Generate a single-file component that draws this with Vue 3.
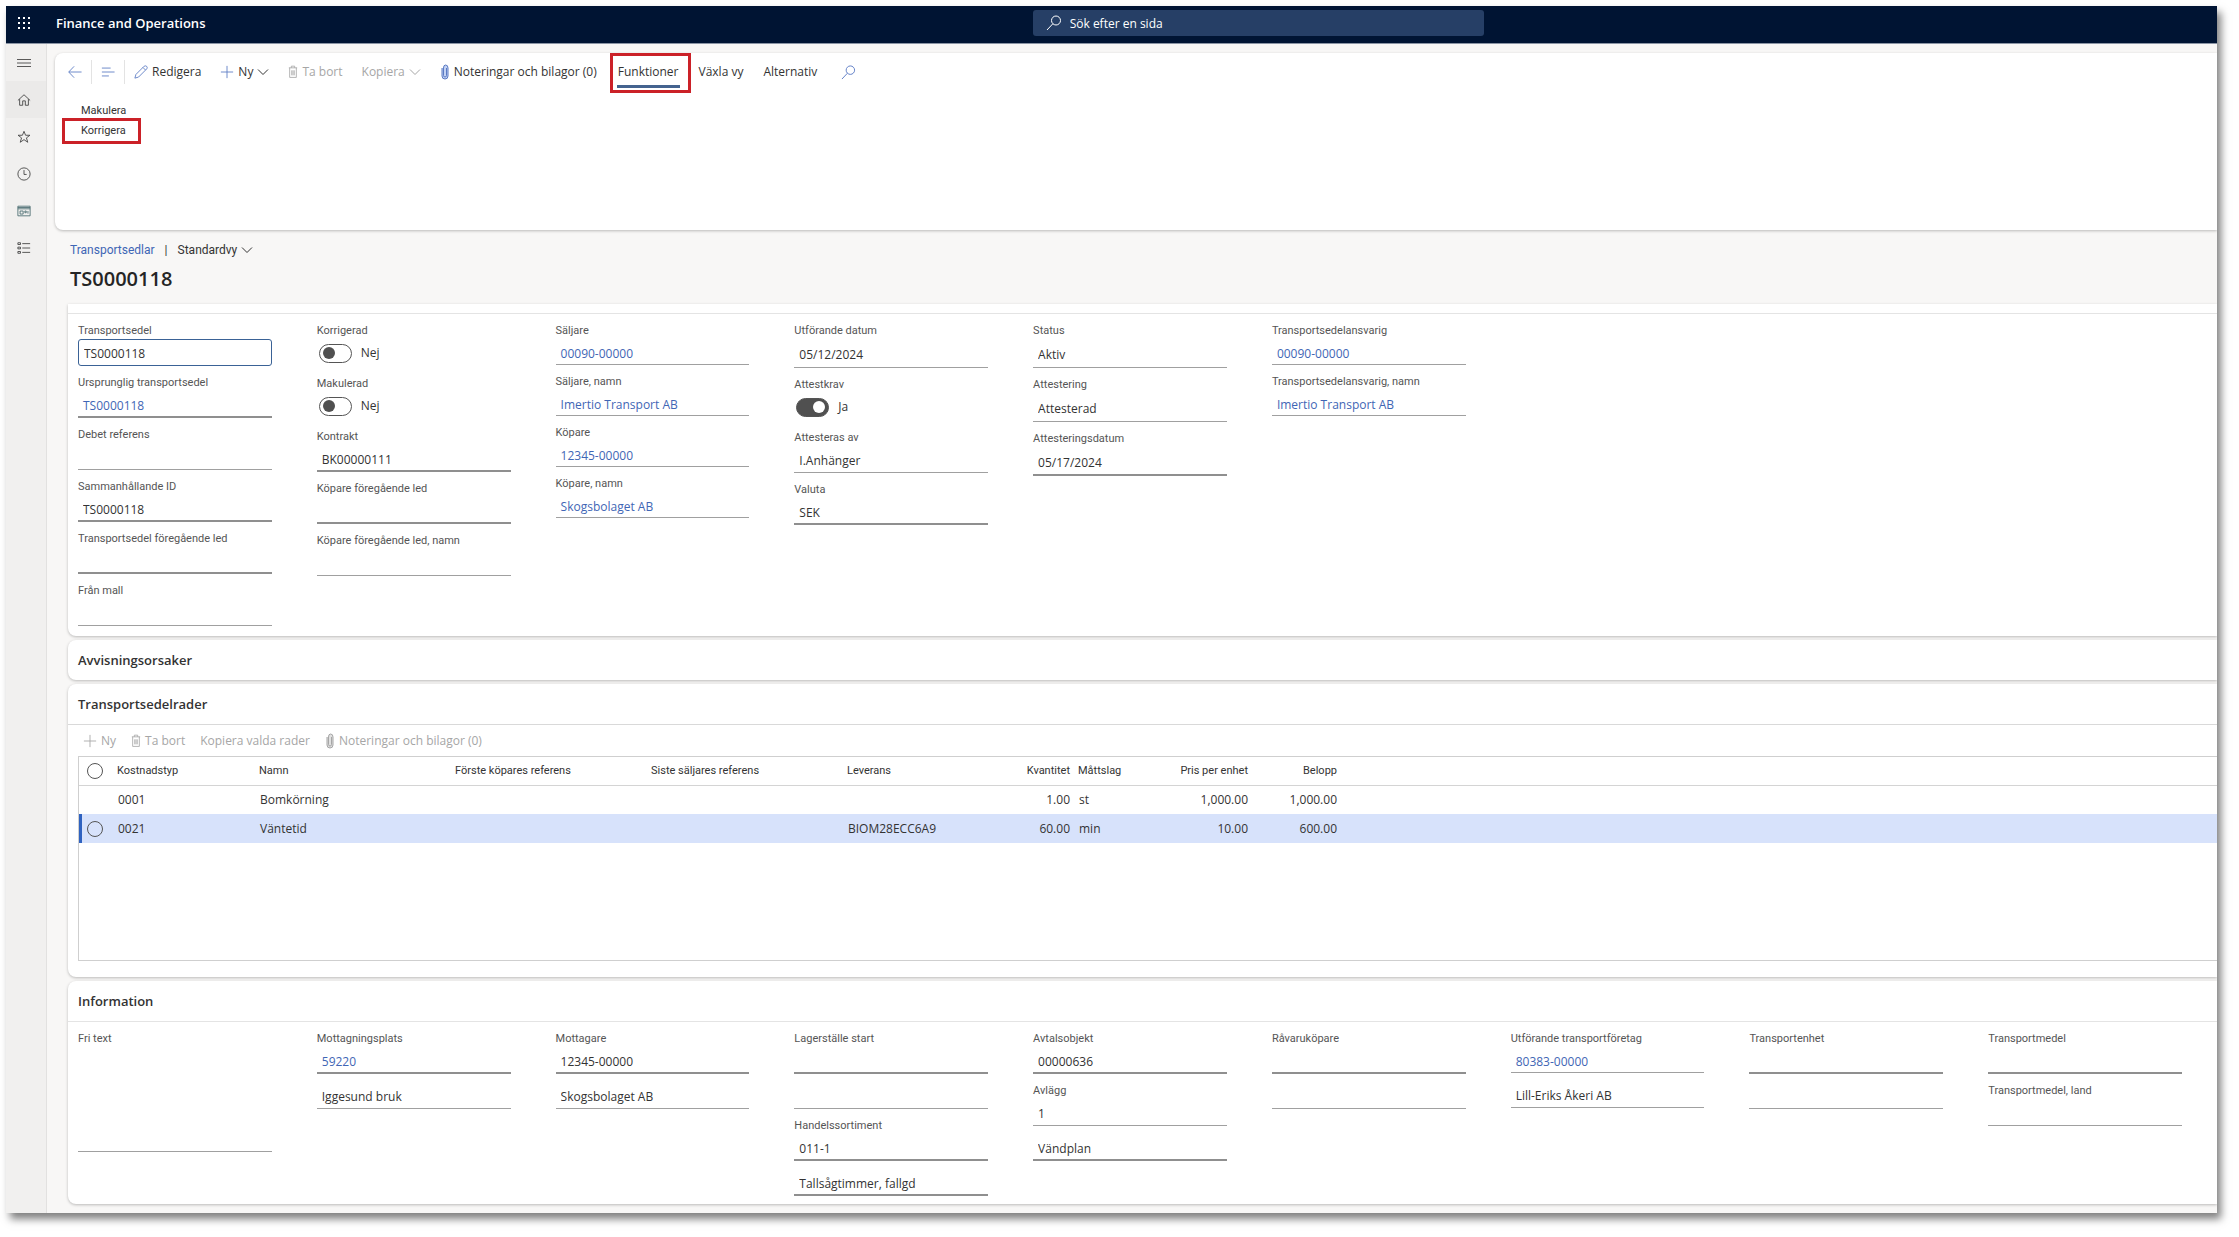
<template>
  <div class="window">
    <header class="topbar">
      <div class="brand">
        <button class="waffle" title="Appar">
          <svg viewBox="0 0 14 14" width="14" height="14">
            <rect v-for="n in 9" :key="n" :x="((n - 1) % 3) * 5 + 1" :y="Math.floor((n - 1) / 3) * 5 + 1" width="2" height="2" />
          </svg>
        </button>
        <span class="brand-name">Finance and Operations</span>
      </div>
      <label class="search">
        <svg viewBox="0 0 16 16" width="16" height="16"><path :d="icons.search" /></svg>
        <input type="text" placeholder="Sök efter en sida" aria-label="Sök efter en sida" />
      </label>
    </header>

    <div class="body">
      <nav class="sidebar">
        <button v-for="item in sidebar" :key="item.icon" :title="item.title" :class="{ active: item.active, teal: item.teal }">
          <svg viewBox="0 0 16 16" width="14" height="14"><path :d="icons[item.icon]" /></svg>
        </button>
      </nav>

      <main class="main">
        <section class="action-pane">
          <div class="toolbar">
            <div class="nav-group">
              <button class="blue" title="Tillbaka">
                <svg viewBox="0 0 16 16" width="14" height="14"><path :d="icons.back" /></svg>
              </button>
              <span class="separator"></span>
              <button class="blue" title="Visa lista">
                <svg viewBox="0 0 16 16" width="14" height="14"><path :d="icons.lines" /></svg>
              </button>
              <span class="separator"></span>
              <button>
                <svg class="blue" viewBox="0 0 16 16" width="14" height="14"><path :d="icons.pencil" /></svg>
                Redigera
              </button>
            </div>
            <button>
              <svg class="blue" viewBox="0 0 16 16" width="14" height="14"><path :d="icons.plus" /></svg>
              Ny
              <svg viewBox="0 0 12 12" width="12" height="12"><path :d="icons.chevron" /></svg>
            </button>
            <button disabled>
              <svg viewBox="0 0 12 16" width="10" height="14"><path :d="icons.trash" /></svg>
              Ta bort
            </button>
            <button disabled>
              Kopiera
              <svg viewBox="0 0 12 12" width="12" height="12"><path :d="icons.chevron" /></svg>
            </button>
            <button>
              <svg class="clip" viewBox="0 0 10 16" width="10" height="16"><path :d="icons.clip" /></svg>
              Noteringar och bilagor (0)
            </button>
            <div class="tabs">
              <button class="tab selected">Funktioner</button>
              <button class="tab">Växla vy</button>
              <button class="tab">Alternativ</button>
              <button class="blue find" title="Sök">
                <svg viewBox="0 0 16 16" width="15" height="15"><path :d="icons.search" /></svg>
              </button>
            </div>
          </div>
          <div class="functions">
            <button>Makulera</button>
            <button class="marked">Korrigera</button>
          </div>
        </section>

        <div class="page-head">
          <div class="crumbs">
            <a href="#">Transportsedlar</a>
            <span>|</span>
            <button>
              Standardvy
              <svg viewBox="0 0 12 12" width="12" height="12"><path :d="icons.chevron" /></svg>
            </button>
          </div>
          <h1>TS0000118</h1>
        </div>

        <section v-for="card in cards" :key="card.id" class="card" :class="card.id">
          <h2 v-if="card.title">{{ card.title }}</h2>

          <div v-if="card.columns" class="fields">
            <div v-for="(column, c) in card.columns" :key="c" class="column">
              <div v-for="(field, f) in column" :key="f" class="field">
                <label v-if="field.label" :for="`${card.id}-${c}-${f}`">{{ field.label }}</label>
                <div v-if="field.type === 'toggle'" class="toggle">
                  <input :id="`${card.id}-${c}-${f}`" v-model="field.value" type="checkbox" role="switch" />
                  <span>{{ field.value ? 'Ja' : 'Nej' }}</span>
                </div>
                <a
                  v-else-if="field.type === 'link'"
                  :id="`${card.id}-${c}-${f}`"
                  href="#"
                  class="control"
                  :class="field.style"
                >{{ field.value }}</a>
                <textarea v-else-if="field.type === 'area'" :id="`${card.id}-${c}-${f}`" class="control light"></textarea>
                <input
                  v-else
                  :id="`${card.id}-${c}-${f}`"
                  v-model="field.value"
                  type="text"
                  class="control"
                  :class="field.style"
                  :aria-label="field.label || field.name"
                />
              </div>
            </div>
          </div>

          <div v-if="card.id === 'lines'" class="lines-body">
            <div class="toolbar small">
              <button disabled>
                <svg viewBox="0 0 16 16" width="14" height="14"><path :d="icons.plus" /></svg>
                Ny
              </button>
              <button disabled>
                <svg viewBox="0 0 12 16" width="10" height="14"><path :d="icons.trash" /></svg>
                Ta bort
              </button>
              <button disabled>Kopiera valda rader</button>
              <button disabled>
                <svg class="clip" viewBox="0 0 10 16" width="10" height="16"><path :d="icons.clip" /></svg>
                Noteringar och bilagor (0)
              </button>
            </div>
            <div class="grid">
              <table>
                <colgroup>
                  <col class="w-select" />
                  <col class="w-type" />
                  <col class="w-text" />
                  <col class="w-text" />
                  <col class="w-text" />
                  <col class="w-type" />
                  <col class="w-num" />
                  <col class="w-num" />
                  <col class="w-num" />
                  <col class="w-num" />
                  <col />
                </colgroup>
                <thead>
                  <tr>
                    <th><input type="radio" name="row" aria-label="Markera alla" /></th>
                    <th v-for="h in headers" :key="h.text" :class="{ num: h.num }">{{ h.text }}</th>
                    <th></th>
                  </tr>
                </thead>
                <tbody>
                  <tr v-for="row in rows" :key="row.cells[0]" :class="{ current: row.current }">
                    <td><input v-if="row.current" type="radio" name="row" aria-label="Markera rad" /></td>
                    <td v-for="(cell, i) in row.cells" :key="i" :class="{ num: headers[i].num }">{{ cell }}</td>
                    <td></td>
                  </tr>
                </tbody>
              </table>
            </div>
          </div>
        </section>
      </main>
    </div>
  </div>
</template>

<script setup>
import { reactive } from 'vue';

const icons = {
  search: 'M14.5 5.5a4.5 4.5 0 1 1-9 0a4.5 4.5 0 1 1 9 0M6.8 8.8L1 15',
  menu: 'M0 4H16M0 8H16M0 12H16',
  home: 'M1 8.5L8 2L15 8.5M3 7V14H6.5V9H9.5V14H13V7',
  star: 'M8 1.5L9.8 6H14.8L10.8 9L12.3 14L8 11L3.7 14L5.2 9L1.2 6H6.2Z',
  clock: 'M15 8a7 7 0 1 1-14 0a7 7 0 1 1 14 0M8 3.5V8.5H11',
  workspace: 'M1 2.5H15V13.5H1ZM1 4H15M1 5.5H15M3.5 8H7V11.5H3.5ZM9 8H10.5V10H9ZM12.5 8V11',
  modules: 'M1 2H4V4H1ZM1 7H4V9H1ZM1 12H4V14H1ZM6 3H15M6 8H15M6 13H15',
  back: 'M15.5 8H1M7 1.5L0.8 8L7 14.5',
  lines: 'M1 3.5H11M1 8H15.5M1 12.5H9',
  pencil: 'M1 15L2.2 10.8L11.6 1.4Q13 0.4 14.5 1.6Q15.7 3 14.6 4.4L5.2 13.8ZM10.2 2.8L13.2 5.8',
  plus: 'M8 1V15M1 8H15',
  chevron: 'M1 3.5L6 8.5L11 3.5',
  trash: 'M1 3H11M4 3V1H8V3M2 3V14.5H10V3M4.5 6V12M6 6V12M7.5 6V12',
  clip: 'M2 4V12Q2 15 5 15Q8 15 8 12V4Q8 1 5.5 1Q3.5 1 3.5 4V11.5Q3.5 13 5 13Q6.5 13 6.5 11.5V4'
};

const sidebar = [
  { icon: 'menu', title: 'Expandera navigeringsfönstret' },
  { icon: 'home', title: 'Start', active: true },
  { icon: 'star', title: 'Favoriter' },
  { icon: 'clock', title: 'Senaste' },
  { icon: 'workspace', title: 'Arbetsytor', teal: true },
  { icon: 'modules', title: 'Moduler' }
];

const cards = reactive([
  {
    id: 'details',
    columns: [
      [
        { label: 'Transportsedel', value: 'TS0000118', style: 'focused' },
        { label: 'Ursprunglig transportsedel', value: 'TS0000118', type: 'link' },
        { label: 'Debet referens', value: '', style: 'light' },
        { label: 'Sammanhållande ID', value: 'TS0000118' },
        { label: 'Transportsedel föregående led', value: '' },
        { label: 'Från mall', value: '', style: 'light' }
      ],
      [
        { label: 'Korrigerad', value: false, type: 'toggle' },
        { label: 'Makulerad', value: false, type: 'toggle' },
        { label: 'Kontrakt', value: 'BK00000111' },
        { label: 'Köpare föregående led', value: '' },
        { label: 'Köpare föregående led, namn', value: '', style: 'light' }
      ],
      [
        { label: 'Säljare', value: '00090-00000', type: 'link', style: 'light compact' },
        { label: 'Säljare, namn', value: 'Imertio Transport AB', type: 'link', style: 'light compact' },
        { label: 'Köpare', value: '12345-00000', type: 'link', style: 'light compact' },
        { label: 'Köpare, namn', value: 'Skogsbolaget AB', type: 'link', style: 'light compact' }
      ],
      [
        { label: 'Utförande datum', value: '05/12/2024', style: 'light tall' },
        { label: 'Attestkrav', value: true, type: 'toggle' },
        { label: 'Attesteras av', value: 'I.Anhänger', style: 'light' },
        { label: 'Valuta', value: 'SEK' }
      ],
      [
        { label: 'Status', value: 'Aktiv', style: 'light tall' },
        { label: 'Attestering', value: 'Attesterad', style: 'light tall' },
        { label: 'Attesteringsdatum', value: '05/17/2024', style: 'tall' }
      ],
      [
        { label: 'Transportsedelansvarig', value: '00090-00000', type: 'link', style: 'light compact' },
        { label: 'Transportsedelansvarig, namn', value: 'Imertio Transport AB', type: 'link', style: 'light compact' }
      ]
    ]
  },
  { id: 'reasons', title: 'Avvisningsorsaker' },
  { id: 'lines', title: 'Transportsedelrader' },
  {
    id: 'info',
    title: 'Information',
    columns: [
      [{ label: 'Fri text', type: 'area' }],
      [
        { label: 'Mottagningsplats', value: '59220', type: 'link' },
        { name: 'Mottagningsplats, namn', value: 'Iggesund bruk', style: 'light' }
      ],
      [
        { label: 'Mottagare', value: '12345-00000' },
        { name: 'Mottagare, namn', value: 'Skogsbolaget AB', style: 'light' }
      ],
      [
        { label: 'Lagerställe start', value: '' },
        { name: 'Lagerställe, namn', value: '', style: 'light' },
        { label: 'Handelssortiment', value: '011-1' },
        { name: 'Handelssortiment, namn', value: 'Tallsågtimmer, fallgd' }
      ],
      [
        { label: 'Avtalsobjekt', value: '00000636' },
        { label: 'Avlägg', value: '1', style: 'light' },
        { name: 'Avlägg, namn', value: 'Vändplan' }
      ],
      [
        { label: 'Råvaruköpare', value: '' },
        { name: 'Råvaruköpare, namn', value: '', style: 'light' }
      ],
      [
        { label: 'Utförande transportföretag', value: '80383-00000', type: 'link', style: 'light compact' },
        { name: 'Transportföretag, namn', value: 'Lill-Eriks Åkeri AB', style: 'light' }
      ],
      [
        { label: 'Transportenhet', value: '' },
        { name: 'Transportenhet, namn', value: '', style: 'light' }
      ],
      [
        { label: 'Transportmedel', value: '' },
        { label: 'Transportmedel, land', value: '', style: 'light' }
      ]
    ]
  }
]);

const headers = [
  { text: 'Kostnadstyp' },
  { text: 'Namn' },
  { text: 'Förste köpares referens' },
  { text: 'Siste säljares referens' },
  { text: 'Leverans' },
  { text: 'Kvantitet', num: true },
  { text: 'Måttslag' },
  { text: 'Pris per enhet', num: true },
  { text: 'Belopp', num: true }
];

const rows = [
  { cells: ['0001', 'Bomkörning', '', '', '', '1.00', 'st', '1,000.00', '1,000.00'] },
  { cells: ['0021', 'Väntetid', '', '', 'BIOM28ECC6A9', '60.00', 'min', '10.00', '600.00'], current: true }
];
</script>

<style>
body {
  margin: 0;
  background: #fff;
}
</style>

<style scoped>
.window {
  margin: 6px 22px 23px 6px;
  font-family: "Open Sans", "Noto Sans", sans-serif;
  font-size: 12px;
  line-height: 16px;
  color: #333;
  background: #f8f7f6;
  box-shadow: 4px 6px 8px rgba(0, 0, 0, 0.5);
}

button {
  display: flex;
  align-items: center;
  gap: 4px;
  padding: 0;
  border: none;
  background: none;
  font: inherit;
  color: inherit;
  white-space: nowrap;
  cursor: pointer;
}

svg {
  flex: none;
  fill: none;
  stroke: currentColor;
  stroke-width: 1;
}

a {
  color: #3f66b5;
  text-decoration: none;
}

.blue {
  color: #5b7bc4;
}

/* Top bar */
.topbar {
  display: grid;
  grid-template-columns: 7fr 451px 5fr;
  align-items: center;
  height: 34px;
  padding-bottom: 3px;
  background: #001433;
  border-bottom: 1px solid #8b95a5;
}

.brand {
  display: flex;
  align-items: center;
  gap: 25px;
  padding-left: 11px;
  color: #fff;
}

.waffle svg {
  fill: #fff;
  stroke: none;
}

.brand-name {
  font-size: 13px;
  font-weight: 600;
}

.search {
  display: flex;
  align-items: center;
  gap: 8px;
  height: 26px;
  padding-left: 13px;
  border-radius: 3px;
  background: #263f66;
  color: #fff;
}

.search input {
  flex: 1;
  padding: 2px 0 0;
  border: none;
  outline: none;
  background: none;
  font: inherit;
  color: #fff;
}

.search input::placeholder {
  color: #fff;
  opacity: 1;
}

.body {
  display: flex;
}

/* Sidebar */
.sidebar {
  flex: none;
  width: 40px;
  border-right: 1px solid #e2e1e0;
  background: #f1f0ef;
}

.sidebar button {
  justify-content: center;
  width: 100%;
  height: 37px;
  padding-right: 4px;
  color: #444;
}

.sidebar button.active {
  background: #ebeae9;
}

.sidebar button.teal {
  color: #4d6e72;
}

.main {
  flex: 1;
  min-width: 0;
  padding: 9px 0 9px 8px;
  overflow: hidden;
}

/* Action pane */
.action-pane {
  min-height: 177px;
  border-radius: 8px 0 0 8px;
  background: #fff;
  box-shadow: 0 1px 3px rgba(0, 0, 0, 0.25);
}

.toolbar {
  display: flex;
  align-items: center;
  gap: 19px;
  height: 38px;
  padding-left: 13px;
}

.toolbar button:disabled {
  color: #a6a6a6;
}

.nav-group {
  display: flex;
  align-items: center;
  gap: 9px;
}

.separator {
  width: 1px;
  height: 24px;
  background: #e3e3e3;
}

.clip {
  color: #5b7bc4;
  fill: #c3d2f3;
}

button:disabled .clip {
  color: #a6a6a6;
  fill: #e0e0e0;
}

.tabs {
  display: flex;
  gap: 20px;
  padding-left: 2px;
}

.tab {
  position: relative;
}

.tab.selected::before {
  content: "";
  position: absolute;
  left: -1px;
  right: -1px;
  bottom: -8px;
  height: 3px;
  background: #44638f;
}

/* Red frames */
.tab.selected::after,
.marked::after {
  content: "";
  position: absolute;
  border: 3px solid #cb2128;
}

.tab.selected::after {
  inset: -11px -12px -13px -8px;
}

.find {
  padding-left: 4px;
}

.functions {
  display: flex;
  flex-direction: column;
  align-items: flex-start;
  gap: 4px;
  padding: 12px 26px;
  font-family: Roboto, sans-serif;
  font-size: 11px;
}

.marked {
  position: relative;
}

.marked::after {
  inset: -5px -15px -5px -19px;
}

/* Page head */
.page-head {
  padding: 12px 15px;
}

.crumbs {
  display: flex;
  gap: 10px;
  font-family: Roboto, sans-serif;
}

h1 {
  margin: 8px 0 0;
  font-size: 20px;
  line-height: 26px;
  font-weight: 600;
  color: #252525;
}

/* Cards */
.card {
  margin: 0 0 4px 13px;
  border-radius: 8px 0 0 8px;
  background: #fff;
  box-shadow: 0 1px 3px rgba(0, 0, 0, 0.25);
}

.card:last-child {
  margin-bottom: 0;
}

.card.details {
  padding: 9px 0 2px;
  border-radius: 0 0 0 8px;
}

h2 {
  margin: 0;
  padding: 10px;
  font-size: 13px;
  line-height: 20px;
  font-weight: 600;
}

.fields {
  display: grid;
  grid-template-columns: repeat(9, minmax(0, 1fr));
  gap: 45px;
  padding: 8px 35px 0 10px;
  border-top: 1px solid #e4e4e4;
}

.field {
  margin-bottom: 8px;
}

.field label {
  display: block;
  height: 16px;
  padding-top: 1px;
  font-family: Roboto, sans-serif;
  font-size: 11px;
  color: #555;
  white-space: nowrap;
}

.control {
  display: block;
  box-sizing: border-box;
  width: 100%;
  height: 27px;
  padding: 3px 5px 0;
  border: none;
  border-bottom: 2px solid #8f8f8f;
  border-radius: 0;
  outline: none;
  background: none;
  font: inherit;
  color: #333;
}

a.control {
  line-height: 24px;
  color: #3f66b5;
}

.control.light {
  border-bottom: 1px solid #a0a0a0;
}

.control.compact {
  height: 26px;
}

.control.tall {
  height: 29px;
}

.control.focused {
  padding-top: 1px;
  border: 1px solid #3a6296;
  border-radius: 3px;
}

textarea.control {
  height: 105px;
  resize: none;
}

.toggle {
  display: flex;
  align-items: center;
  gap: 9px;
  height: 28px;
  padding-left: 2px;
}

.toggle input {
  appearance: none;
  display: flex;
  align-items: center;
  box-sizing: border-box;
  width: 33px;
  height: 19px;
  margin: 0;
  padding: 0 3px;
  border: 1px solid #555;
  border-radius: 10px;
}

.toggle input::before {
  content: "";
  width: 12px;
  height: 12px;
  border-radius: 50%;
  background: #505050;
}

.toggle input:checked {
  justify-content: flex-end;
  background: #505050;
}

.toggle input:checked::before {
  background: #fff;
}

/* Lines */
.lines-body {
  padding: 0 0 16px 10px;
  border-top: 1px solid #d9d9d9;
}

.toolbar.small {
  gap: 15px;
  height: 31px;
  padding-left: 5px;
}

.grid {
  min-height: 203px;
  border: 1px solid #cfcfcf;
  border-right: none;
}

table {
  width: 100%;
  border-collapse: collapse;
  table-layout: fixed;
}

.w-select {
  width: 34px;
}

.w-type {
  width: 142px;
}

.w-text {
  width: 196px;
}

.w-num {
  width: 89px;
}

th,
td {
  height: 29px;
  padding: 0 4px;
  box-sizing: border-box;
  text-align: left;
  font-weight: 400;
  white-space: nowrap;
}

th {
  height: 28px;
  border-bottom: 1px solid #d4d4d4;
  font-family: Roboto, sans-serif;
  font-size: 11px;
}

td {
  padding-left: 5px;
}

.num {
  text-align: right;
}

.current {
  background: #d7e2fb;
}

.current td:first-child {
  box-shadow: inset 3px 0 #2f62c0;
}

th input,
td input {
  appearance: none;
  display: block;
  box-sizing: border-box;
  width: 16px;
  height: 16px;
  margin: 0 0 0 4px;
  border: 1px solid #555;
  border-radius: 50%;
}

td input {
  margin-left: 3px;
}
</style>
